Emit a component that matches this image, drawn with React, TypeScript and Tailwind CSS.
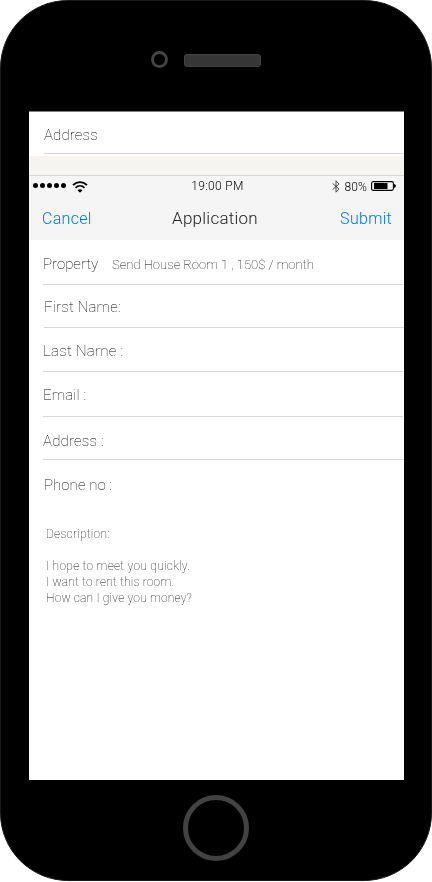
import React from "react";

type RowProps = {
  label: string;
  className: string;
  labelClass: string;
  children?: React.ReactNode;
};

function Row({ label, className, labelClass, children }: RowProps) {
  return (
    <div className={`flex shrink-0 border-[#d6d6d6] ${className}`}>
      <span className={`h-5 text-[15px] leading-5 ${labelClass}`}>{label}</span>
      {children}
    </div>
  );
}

function SignalDots() {
  return (
    <div className="mb-px flex gap-[2px]">
      {[0, 1, 2, 3, 4].map((i) => (
        <span key={i} className="h-[5px] w-[5px] rounded-full bg-black" />
      ))}
    </div>
  );
}

function Wifi() {
  return (
    <svg className="ml-[6px] mt-px" width="16" height="12" viewBox="0 0 16 12" fill="none" stroke="#000" strokeWidth="1.8">
      <path d="M1 4.1C5 .2 11 .2 15 4.1" />
      <path d="M3.5 6.9C6.1 4.3 9.9 4.3 12.5 6.9" />
      <path d="M5.5 9.2C6.8 7.8 9.2 7.8 10.5 9.2L8 11.8Z" fill="#000" stroke="none" />
    </svg>
  );
}

function Bluetooth() {
  return (
    <svg width="8" height="13" viewBox="0 0 8 13" fill="none" stroke="#222" strokeWidth="0.8">
      <path d="M.6 3.4L7 9L4 12.2V.8L7 4L.6 9.6" />
    </svg>
  );
}

function Battery() {
  return (
    <svg className="ml-[4px]" width="25" height="10" viewBox="0 0 25 10" fill="none">
      <rect x=".6" y=".6" width="21.8" height="8.8" rx="1.6" stroke="#000" strokeWidth="1.1" />
      <rect x="3" y="2" width="13.5" height="6" fill="#000" />
      <path d="M23 3Q25 3.4 25 5Q25 6.6 23 7Z" fill="#000" />
    </svg>
  );
}

export default function App() {
  return (
    <div className="h-[882px] w-[432px] bg-white font-['Roboto',sans-serif]">
      <div className="flex h-[881px] w-[432px] flex-col rounded-[68px] border border-[#181b1b] bg-black">
        <div className="flex h-[110px] shrink-0 pl-[150px] pt-[50px]">
          <span className="h-[17px] w-[17px] rounded-full border-[3px] border-[#444]" />
          <span className="ml-[16px] mt-[3px] h-[13px] w-[77px] rounded-[3px] border border-[#424242] bg-[#363636]" />
        </div>

        <main className="ml-[28px] flex h-[669px] w-[375px] shrink-0 flex-col border-t border-[#808080] bg-white font-thin text-black will-change-transform">
          <Row label="Address" className="ml-[15px] h-[42px] border-b pt-[13px]" labelClass="tracking-[0.15px]" />
          <div className="mt-[2px] h-[20px] shrink-0 border-b border-[#d4d4d4] bg-[#f5f4f0]" />

          <header className="h-[64px] shrink-0 bg-[#f5f5f5]">
            <div className="grid h-[20px] grid-cols-[1fr_auto_1fr] items-center text-[12px] font-light leading-[18px] text-black">
              <div className="flex items-center pl-1">
                <SignalDots />
                <Wifi />
              </div>
              <span className="-mr-px ml-px pb-px tracking-[0.35px]">19:00 PM</span>
              <div className="flex items-center justify-end pr-[8px]">
                <Bluetooth />
                <span className="ml-[5px] mt-px tracking-[0.1px]">80%</span>
                <Battery />
              </div>
            </div>
            <div className="grid grid-cols-[1fr_auto_1fr] items-center pl-[13px] pr-[12px] pt-[11px] text-[16px] font-light leading-6 tracking-[0.3px]">
              <button className="text-left text-[#0072ff]">Cancel</button>
              <h1 className="-ml-[2px] mr-[2px] pb-[2px] text-[17px] leading-[22px] tracking-[0.25px] text-[#222]">Application</h1>
              <button className="text-right text-[#0072ff]">Submit</button>
            </div>
          </header>

          <Row label="Property" className="ml-[14px] mr-px h-[45px] border-b border-[#c8c8c8] pt-[14px]" labelClass="w-[69px]">
            <span className="mt-px h-5 text-[13px] leading-5 tracking-[0.02px]">Send House Room 1 , 150$ / month</span>
          </Row>
          <Row label="First Name:" className="ml-[15px] h-[43px] border-b pt-[12px]" labelClass="tracking-[0.2px]" />
          <Row label="Last Name :" className="ml-[14px] mr-px h-[44px] border-b pt-[13px]" labelClass="tracking-[0.3px]" />
          <Row label="Email :" className="ml-[14px] mr-px h-[45px] border-b pt-[13px]" labelClass="tracking-[0.15px]" />
          <Row label="Address :" className="ml-[14px] h-[43px] border-b pt-[14px]" labelClass="tracking-[0.2px]" />
          <Row label="Phone no :" className="ml-[15px] h-[66px] pt-[15px]" labelClass="tracking-[0.05px]" />
          <div className="ml-[17px] flex flex-col text-[12px] leading-4 tracking-[0.2px]">
            <p className="mb-4 tracking-[0.25px]">Description:</p>
            <p className="tracking-[0.28px]">I hope to meet you quickly.</p>
            <p>I want to rent this room.</p>
            <p>How can I give you money?</p>
          </div>
        </main>

        <div className="flex h-[99px] shrink-0 justify-center pt-[15px]">
          <span className="h-[66px] w-[66px] rounded-full border-[5px] border-[#424242]" />
        </div>
      </div>
    </div>
  );
}
